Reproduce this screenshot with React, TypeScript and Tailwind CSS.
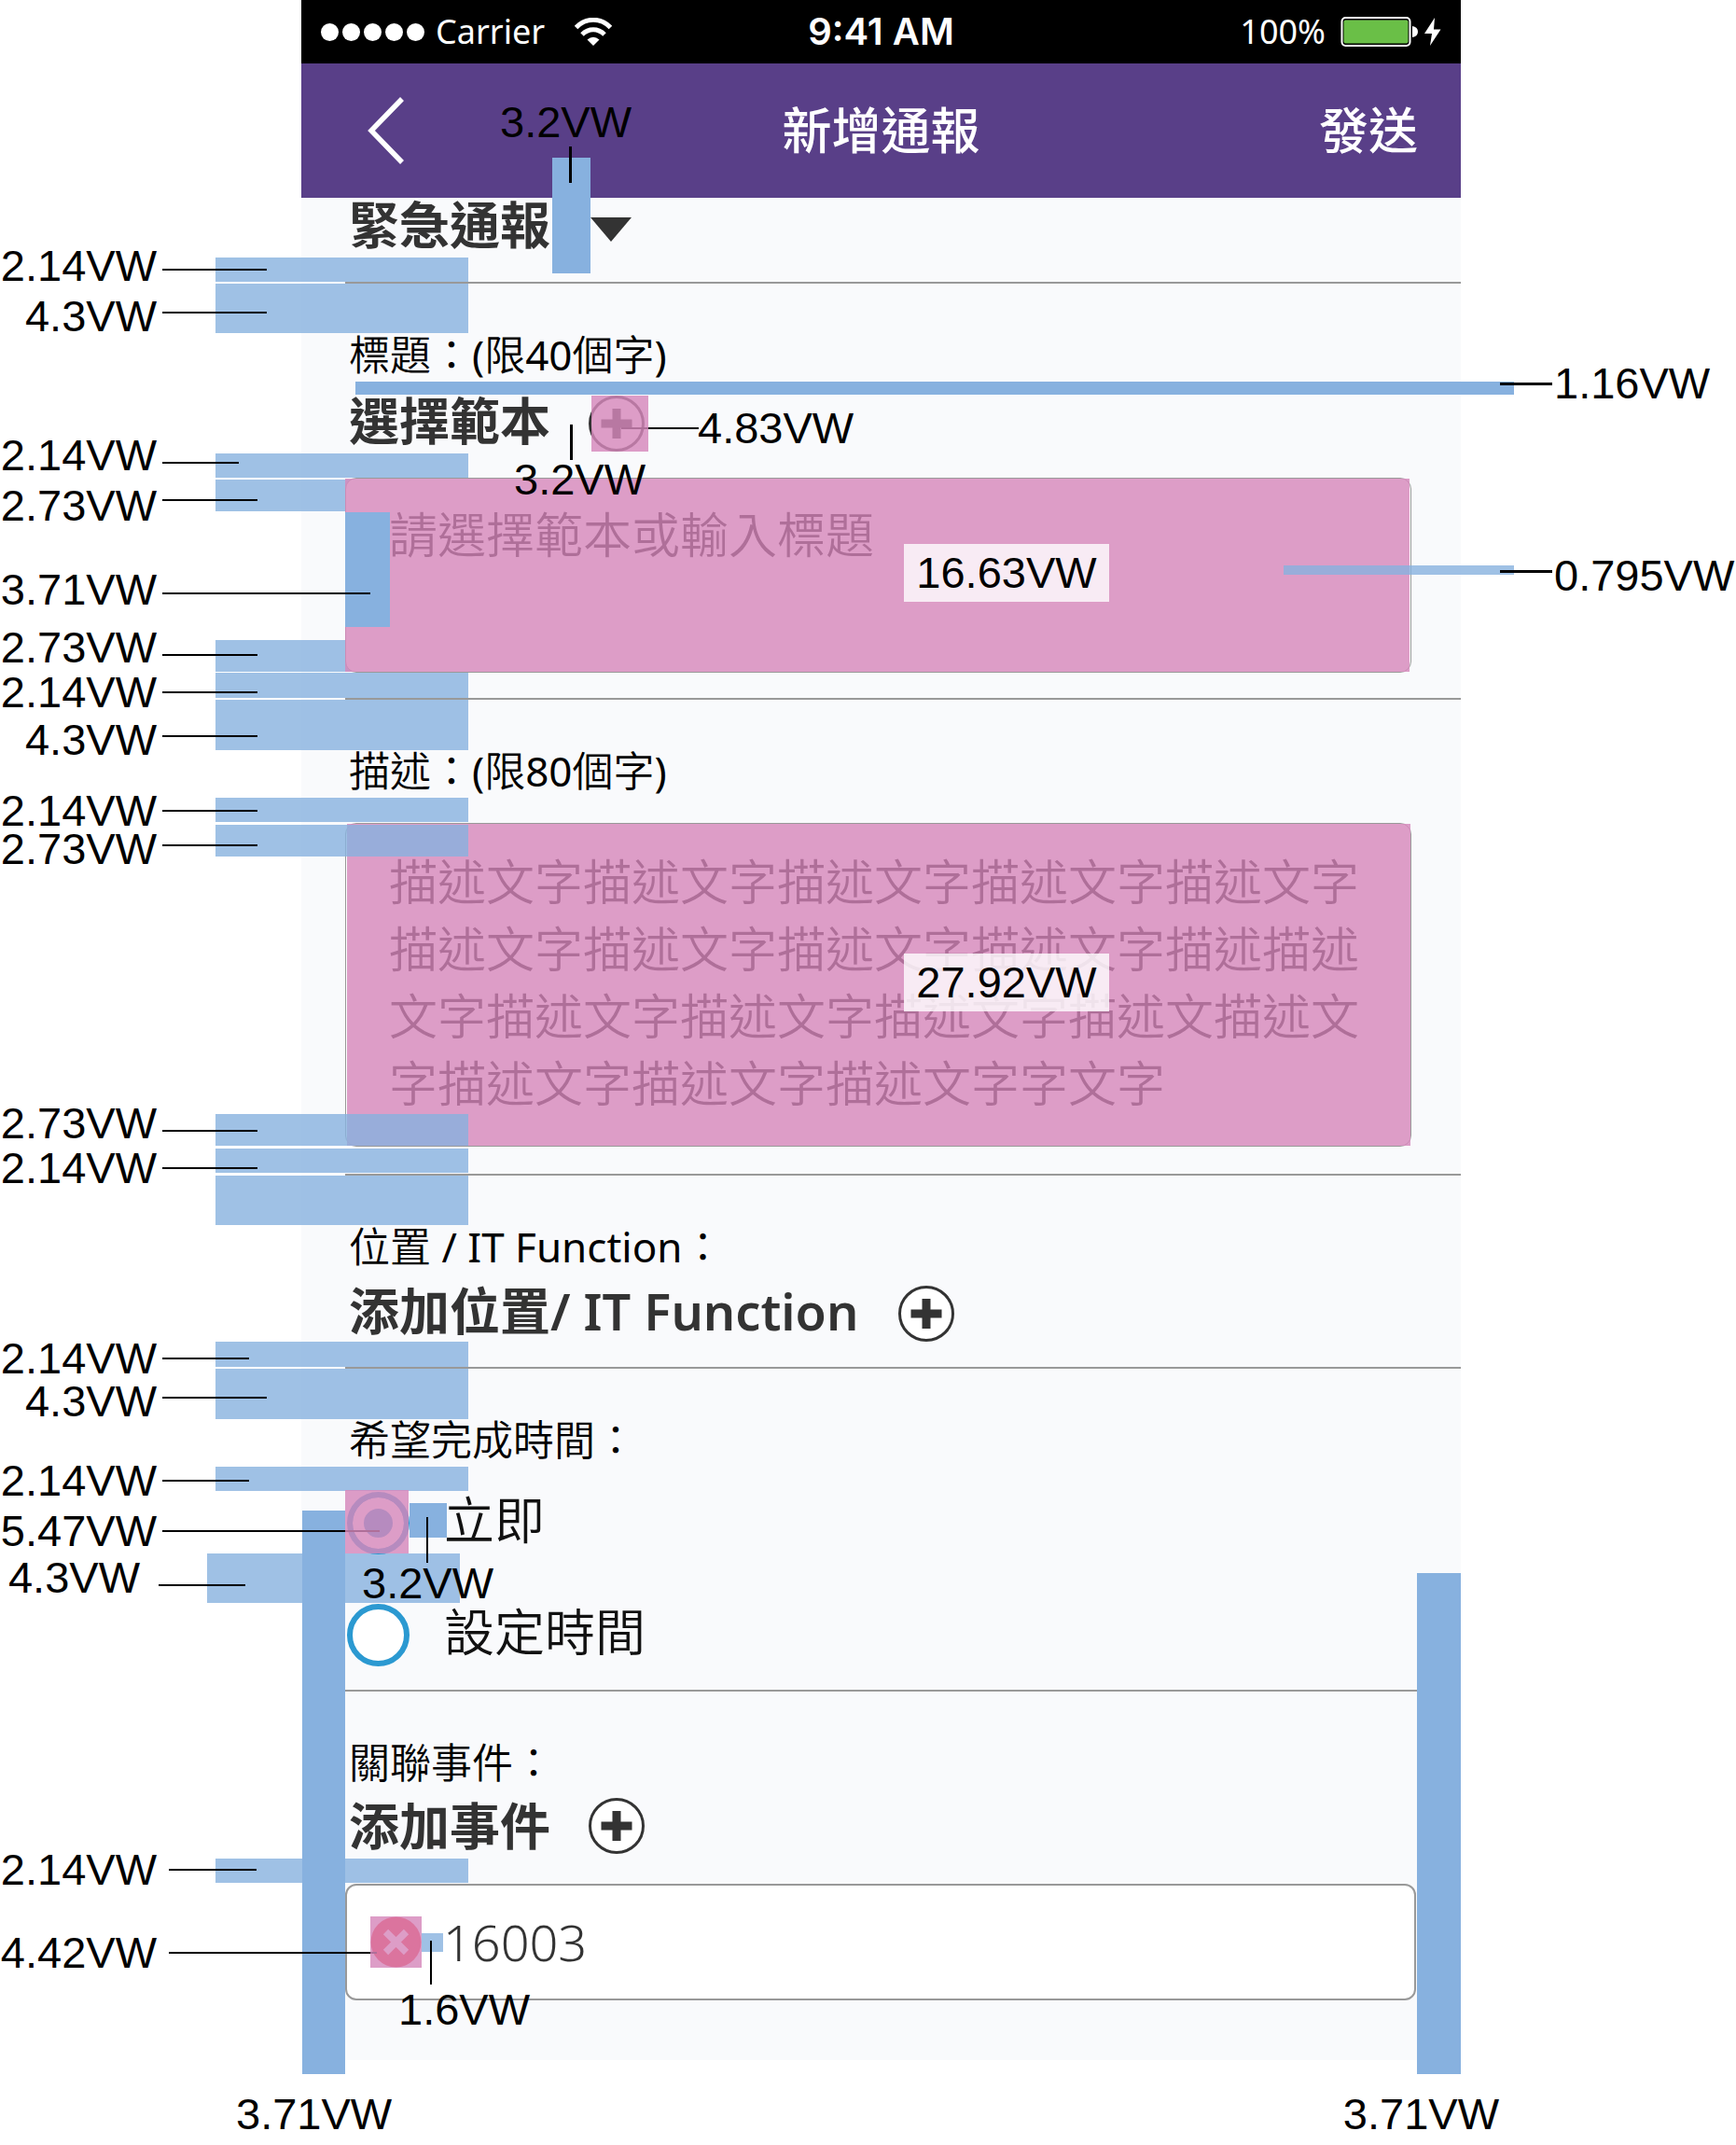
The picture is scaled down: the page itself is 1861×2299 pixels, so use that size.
import type { ReactNode } from "react";

type Styled = { className?: string };
type Box = Styled & { children?: ReactNode };

/*
 * Every band of the board is one grid row. The columns are: labels, outer part
 * of the strips, screen margin, inner part of the strips, screen body, screen
 * margin, outer part of the right strips, right labels.
 */
function Band({ children }: Box) {
  return (
    <div className="grid grid-cols-[231px_92px_47px_132px_minmax(0,1fr)_47px_57px_238px] items-start">{children}</div>
  );
}

/* The part of a band that belongs to the phone screen. */
function Panel({ className = "", children }: Box) {
  return (
    <section className="col-start-3 col-end-7 row-start-1 bg-[#f9fafc] pl-[47px]">
      <div className={`relative ${className}`}>{children}</div>
    </section>
  );
}

function Strips({ children }: Box) {
  return <div className="col-start-2 col-end-5 row-start-1 flex flex-col">{children}</div>;
}

function Strip({ className = "" }: Styled) {
  return <span aria-hidden="true" className={`block bg-[#87b1df]/80 ${className}`} />;
}

function SolidStrip({ className = "" }: Styled) {
  return <span aria-hidden="true" className={`z-10 block bg-[#87b1df] ${className}`} />;
}

/* Tint over an element whose size is called out; shares its grid cell. */
function Highlight({ className = "" }: Styled) {
  return (
    <span
      aria-hidden="true"
      className={`pointer-events-none col-start-1 row-start-1 bg-[#d588bb]/82 ${className}`}
    />
  );
}

function Notes({ children }: Box) {
  return <div className="z-20 col-start-1 row-start-1 -mb-10 flex flex-col">{children}</div>;
}

const noteText = "whitespace-nowrap font-['Liberation_Sans',Arial,sans-serif] text-[47px] leading-[40px] text-black";

function Note({ className = "", line, children }: Box & { line: string }) {
  return (
    <div className={`flex items-center gap-1.5 ${className}`}>
      <span className={`flex w-[168px] shrink-0 justify-end ${noteText}`}>{children}</span>
      <span className={`h-0.5 shrink-0 bg-black ${line}`} />
    </div>
  );
}

function SideNote({ className = "", line, children }: Box & { line: string }) {
  return (
    <div className={`flex items-center gap-0.5 ${className}`}>
      <span className={`h-[3px] w-14 shrink-0 bg-black ${line}`} />
      <span className={noteText}>{children}</span>
    </div>
  );
}

function SizeTag({ children }: Box) {
  return (
    <span
      className={`z-10 col-start-1 row-start-1 mb-1.5 mr-[324px] w-[220px] self-center justify-self-end bg-white/80 py-[11px] text-center ${noteText}`}
    >
      {children}
    </span>
  );
}

function AddButton({ label, tinted = false }: { label: string; tinted?: boolean }) {
  return (
    <span className="grid shrink-0">
      <button type="button" aria-label={label} className="col-start-1 row-start-1 size-[60px]">
        <svg viewBox="0 0 60 60" className="size-full">
          <circle cx="30" cy="30" r="28.5" fill="#fff" stroke="#333" strokeWidth="3" />
          <path d="M30 14v32M13.500 30h33" stroke="#333" strokeWidth="9" />
        </svg>
      </button>
      {tinted && <Highlight className="z-30 -mr-1 ml-[3px]" />}
    </span>
  );
}

const thinText = "font-['Noto_Sans','Noto_Sans_CJK_TC_DemiLight','Noto_Sans_CJK_TC',sans-serif] font-normal";

function Caption({ children, htmlFor }: Box & { htmlFor?: string }) {
  return (
    <label htmlFor={htmlFor} className={`block pl-1 text-[44px] leading-[56px] text-black ${thinText}`}>
      {children}
    </label>
  );
}

const heading = "text-[54px] font-bold text-[#333]";
const textBox =
  "col-start-1 row-start-1 block size-full resize-none overflow-hidden rounded-xl border border-[#999] bg-white pl-[46px] pr-10 text-[52px] font-[350] leading-[72px] text-black";

function StatusBar() {
  return (
    <div className="grid h-[68px] grid-cols-3 items-center bg-black px-[21px] text-[36px] leading-[44px] text-white">
      <div className="flex items-center">
        <div className="flex gap-1">
          <span className="size-[19px] rounded-full bg-white" />
          <span className="size-[19px] rounded-full bg-white" />
          <span className="size-[19px] rounded-full bg-white" />
          <span className="size-[19px] rounded-full bg-white" />
          <span className="size-[19px] rounded-full bg-white" />
        </div>
        <span className="ml-3">Carrier</span>
        <svg viewBox="0 0 40 30" className="ml-8 h-[30px] w-10" fill="none">
          <path d="M1.500 10.500C12 -.5 28 -.5 38.500 10.500" stroke="#fff" strokeWidth="5" />
          <path d="M8 18C15 11 25 11 32 18" stroke="#fff" strokeWidth="5" />
          <path d="M13.500 23.500Q20 18 26.500 23.500L20 30Z" fill="#fff" />
        </svg>
      </div>
      <div className="text-center font-['Inter',sans-serif] text-[40px] font-semibold">9:41 AM</div>
      <div className="flex items-center justify-end">
        <span>100%</span>
        <svg viewBox="0 0 84 34" className="ml-4 h-[34px] w-[84px]">
          <rect x="1.500" y="2" width="73" height="30" rx="4" fill="none" stroke="#fff" strokeWidth="2" />
          <rect x="3.500" y="4.500" width="69" height="25" rx="2" fill="#6abf47" />
          <path d="M77 11q6 1 6 6t-6 6z" fill="#fff" />
        </svg>
        <svg viewBox="0 0 18 30" className="ml-1.5 h-[30px] w-[18px]">
          <path d="M11 0 0 17h8L6 30 17.500 12.500H10z" fill="#fff" />
        </svg>
      </div>
    </div>
  );
}

function NavBar() {
  return (
    <header className="grid h-[144px] grid-cols-3 items-center bg-[#593f88] px-[46px] text-[53px] font-medium leading-[64px] text-white">
      <button type="button" aria-label="返回" className="ml-6 justify-self-start">
        <svg viewBox="0 0 40 72" className="h-[72px] w-10" fill="none">
          <path d="M38 2 5 36l33 34" stroke="#fff" strokeWidth="5.500" />
        </svg>
      </button>
      <h1 className="text-center">新增通報</h1>
      <button type="button" className="justify-self-end">
        發送
      </button>
    </header>
  );
}

function TypeBand() {
  return (
    <Band>
      <Panel className="border-b-2 border-[#999] pb-8">
        <div className="flex items-center gap-[43px] pl-1">
          <select aria-label="通報類型" className={`h-[58px] appearance-none bg-transparent leading-[56px] ${heading}`}>
            <option>緊急通報</option>
          </select>
          <svg viewBox="0 0 44 26" className="mt-2.5 h-[26px] w-11">
            <path d="M0 0h44L22 26z" fill="#333" />
          </svg>
        </div>
        <SolidStrip className="absolute left-[222px] top-[-43px] h-[124px] w-[41px]" />
        <span className="absolute left-[240px] top-[-55px] z-20 h-[39px] w-[3px] bg-black" />
        <span className={`absolute left-[166px] top-[-101px] z-20 ${noteText}`}>3.2VW</span>
      </Panel>
      <Strips>
        <Strip className="mt-16 h-[26px]" />
      </Strips>
      <Notes>
        <Note className="mt-[53px]" line="mt-2 w-28">2.14VW</Note>
      </Notes>
    </Band>
  );
}

function TitleBand() {
  return (
    <Band>
      <Panel className="border-b-2 border-[#999] pb-[27px] pt-12">
        <Caption htmlFor="title">標題：(限40個字)</Caption>
        <div className="mt-4 flex items-start gap-[41px] pl-1">
          <span className={`leading-[54px] ${heading}`}>選擇範本</span>
          <AddButton label="選擇範本" tinted />
        </div>
        <div className="mr-[53px] mt-7 grid h-[209px]">
          <textarea
            id="title"
            maxLength={40}
            placeholder="請選擇範本或輸入標題"
            className={`${textBox} py-6 placeholder:text-black placeholder:opacity-100`}
          />
          <Highlight className="z-[1] my-px mr-0.5" />
          <SolidStrip className="col-start-1 row-start-1 mt-[37px] h-[123px] w-12" />
          <SizeTag>16.63VW</SizeTag>
        </div>
        <span className="absolute left-[296px] top-[154px] z-20 h-0.5 w-[83px] bg-black" />
        <span className={`absolute left-[378px] top-[135px] z-20 ${noteText}`}>4.83VW</span>
        <span className="absolute left-[241px] top-[151px] z-20 h-[38px] w-[3px] bg-black" />
        <span className={`absolute left-[181px] top-[190px] z-20 ${noteText}`}>3.2VW</span>
      </Panel>
      <Strips>
        <Strip className="h-[53px]" />
        <Strip className="mt-[129px] h-[26px]" />
        <Strip className="mt-0.5 h-[34px]" />
        <Strip className="mt-[138px] h-[34px]" />
        <Strip className="mt-px h-[27px]" />
      </Strips>
      <SolidStrip className="col-start-3 col-end-8 row-start-1 ml-[58px] mt-[105px] h-3.5" />
      <Strip className="z-10 col-start-5 col-end-8 row-start-1 mt-[302px] h-2.5 w-[247px] justify-self-end" />
      <Notes>
        <Note className="mt-[15px]" line="-mt-2 w-28">4.3VW</Note>
        <Note className="mt-[109px]" line="mt-4 w-[82px]">2.14VW</Note>
        <Note className="mt-3.5" line="-mt-3 w-[102px]">2.73VW</Note>
        <Note className="mt-[50px]" line="mt-2 w-[223px]">3.71VW</Note>
        <Note className="mt-[22px]" line="mt-4 w-[102px]">2.73VW</Note>
        <Note className="mt-2" line="w-[102px]">2.14VW</Note>
      </Notes>
      <div className="z-20 col-start-7 col-end-9 row-start-1 ml-[42px] flex flex-col">
        <SideNote className="mt-[87px]" line="">1.16VW</SideNote>
        <SideNote className="mt-[166px]" line="-mt-2.5">0.795VW</SideNote>
      </div>
    </Band>
  );
}

function DescriptionBand() {
  return (
    <Band>
      <Panel className="border-b-2 border-[#999] pb-[29px] pt-12">
        <Caption htmlFor="description">描述：(限80個字)</Caption>
        <div className="mr-[53px] mt-7 grid h-[347px]">
          <textarea
            id="description"
            maxLength={80}
            defaultValue="描述文字描述文字描述文字描述文字描述文字描述文字描述文字描述文字描述文字描述描述文字描述文字描述文字描述文字描述文描述文字描述文字描述文字描述文字字文字"
            className={`${textBox} py-[26px]`}
          />
          <Highlight className="z-[1] my-px ml-0.5 mr-px" />
          <SizeTag>27.92VW</SizeTag>
        </div>
      </Panel>
      <Strips>
        <Strip className="h-[54px]" />
        <Strip className="mt-[51px] h-[26px]" />
        <Strip className="z-10 mt-[3px] h-[34px]" />
        <Strip className="z-10 mt-[276px] h-[34px]" />
        <Strip className="mt-[3px] h-[26px]" />
      </Strips>
      <Notes>
        <Note className="mt-[23px]" line="-mt-2 w-[102px]">4.3VW</Note>
        <Note className="mt-9" line="w-[102px]">2.14VW</Note>
        <Note className="mt-px" line="-mt-2 w-[102px]">2.73VW</Note>
        <Note className="mt-[254px]" line="mt-4 w-[102px]">2.73VW</Note>
        <Note className="mt-2" line="w-[102px]">2.14VW</Note>
      </Notes>
    </Band>
  );
}

function LocationBand() {
  return (
    <Band>
      <Panel className="border-b-2 border-[#999] pb-[27px] pt-12">
        <Caption>位置 / IT Function：</Caption>
        <div className="mt-3.5 flex items-start gap-[43px] pl-1">
          <span className="text-[54px] font-semibold leading-[54px] text-[#333]">添加位置/ IT Function</span>
          <AddButton label="添加位置" />
        </div>
      </Panel>
      <Strips>
        <Strip className="h-[53px]" />
        <Strip className="mt-[125px] h-[27px]" />
      </Strips>
      <Notes>
        <Note className="mt-44" line="w-[93px]">2.14VW</Note>
      </Notes>
    </Band>
  );
}

const radio =
  "size-[67px] shrink-0 appearance-none rounded-full border-[6px] border-[#2b99d1] bg-white checked:bg-[#2b99d1] checked:shadow-[inset_0_0_0_12px_#fff] col-start-1 row-start-1";

function TimeBand() {
  return (
    <Band>
      <Panel className="border-b-2 border-[#999] pb-[25px] pt-12">
        <Caption>希望完成時間：</Caption>
        <div className="mt-7 flex flex-col items-start gap-[53px] pl-0.5 text-[54px] font-[350] leading-[60px] text-[#111]">
          <label className="flex items-start gap-[37px]">
            <span className="grid">
              <input type="radio" name="time" defaultChecked className={radio} />
              <Highlight className="z-30 -ml-0.5 -mt-0.5 mb-px mr-px" />
            </span>
            立即
          </label>
          <label className="flex items-start gap-[37px]">
            <input type="radio" name="time" className={radio} />
            設定時間
          </label>
        </div>
        <SolidStrip className="absolute left-[69px] top-[144px] h-[37px] w-10" />
        <span className="absolute left-[87px] top-[159px] z-20 h-[49px] w-0.5 bg-black" />
        <span className={`absolute left-[18px] top-[210px] z-20 ${noteText}`}>3.2VW</span>
      </Panel>
      <Strips>
        <Strip className="h-[54px]" />
        <Strip className="mt-[51px] h-[26px]" />
        <Strip className="-ml-[9px] mr-[9px] mt-[67px] h-[53px]" />
      </Strips>
      <SolidStrip className="col-start-3 row-start-1 ml-px mt-[152px] self-stretch" />
      <SolidStrip className="col-start-6 row-start-1 mt-[219px] self-stretch" />
      <Notes>
        <Note className="mt-[15px]" line="-mt-2 w-28">4.3VW</Note>
        <Note className="mt-[45px]" line="w-[93px]">2.14VW</Note>
        <Note className="mt-3.5" line="w-[233px]">5.47VW</Note>
        <Note className="-ml-[18px] mt-2.5" line="ml-3.5 mt-4 w-[93px]">4.3VW</Note>
      </Notes>
    </Band>
  );
}

function EventBand() {
  return (
    <Band>
      <Panel className="pb-16 pt-12">
        <Caption>關聯事件：</Caption>
        <div className="mt-2.5 flex items-center gap-[41px] pl-1">
          <span className={`leading-[60px] ${heading}`}>添加事件</span>
          <AddButton label="添加事件" />
        </div>
        <div className="mr-12 mt-8 flex h-[125px] items-center rounded-xl border-2 border-[#999] bg-white pl-[25px] text-[54px] font-[350] text-[#333]">
          <button type="button" aria-label="刪除 16003" className="grid size-[55px]">
            <svg viewBox="0 0 55 55" className="col-start-1 row-start-1 size-full">
              <circle cx="27.500" cy="27.500" r="27" fill="#f51e20" />
              <path d="m16.500 16.500 22 22m0-22-22 22" stroke="#fff" strokeWidth="7.500" />
            </svg>
            <Highlight className="z-30" />
          </button>
          <Strip className="h-5 w-[23px]" />
          <span>16003</span>
        </div>
        <span className="absolute left-[91px] top-[267px] z-20 h-[47px] w-0.5 bg-black" />
        <span className={`absolute left-[57px] top-[321px] z-20 ${noteText}`}>1.6VW</span>
      </Panel>
      <Strips>
        <Strip className="mt-[179px] h-[26px]" />
      </Strips>
      <SolidStrip className="col-start-3 row-start-1 -mb-[15px] ml-px self-stretch" />
      <SolidStrip className="col-start-6 row-start-1 -mb-[15px] self-stretch" />
      <Notes>
        <Note className="mt-[171px]" line="ml-[7px] w-[94px]">2.14VW</Note>
        <Note className="mt-[49px]" line="ml-[7px] w-[223px]">4.42VW</Note>
      </Notes>
    </Band>
  );
}

export default function App() {
  return (
    <main className="overflow-x-hidden bg-white font-['Noto_Sans','Noto_Sans_CJK_TC',sans-serif]">
      <Band>
        <div className="col-start-3 col-end-7">
          <StatusBar />
          <NavBar />
        </div>
      </Band>
      <TypeBand />
      <TitleBand />
      <DescriptionBand />
      <LocationBand />
      <TimeBand />
      <EventBand />
      <footer className="flex justify-between pb-3 pl-[253px] pr-[254px] pt-[38px]">
        <span className={noteText}>3.71VW</span>
        <span className={noteText}>3.71VW</span>
      </footer>
    </main>
  );
}
